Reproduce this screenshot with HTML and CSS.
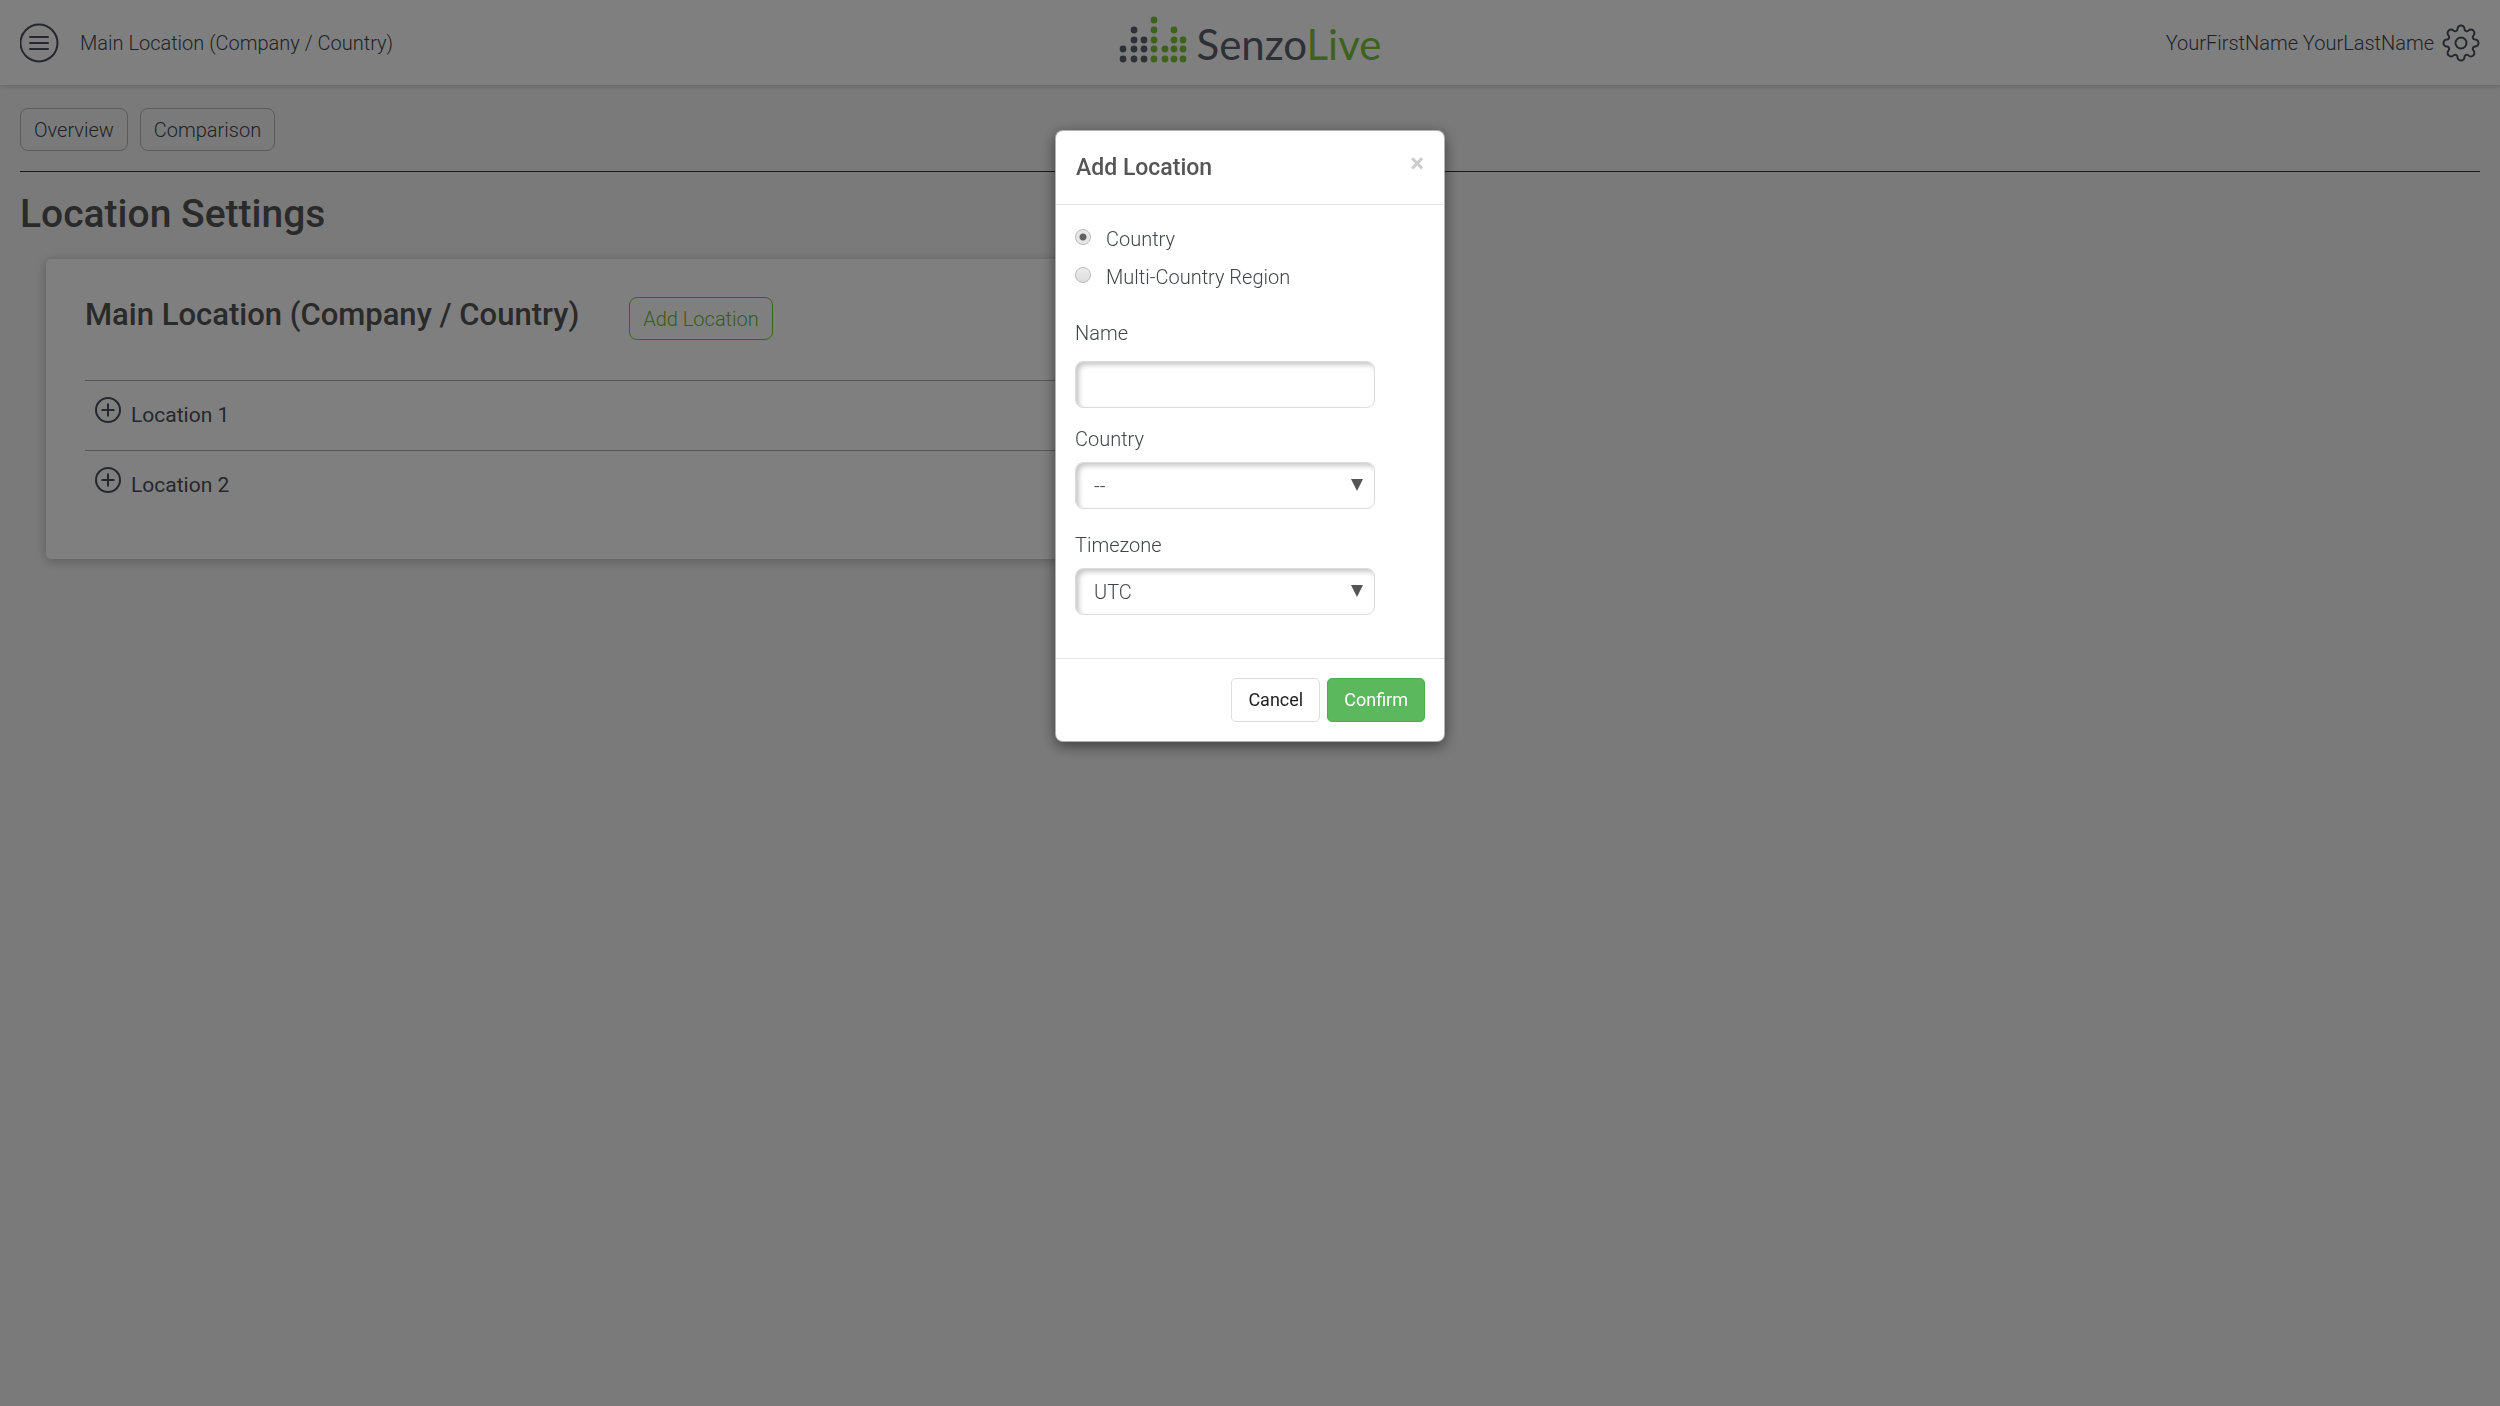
FILE: index.html
```html
<!DOCTYPE html>
<html lang="en">
<head>
    <meta charset="UTF-8">
    <meta name="viewport" content="width=device-width, initial-scale=1.0">
    <title>SenzoLive - Location Settings</title>
    <link rel="stylesheet" href="styles.css">
</head>
<body>
    <header class="topbar">
        <div class="topbar-left">
            <button class="icon-button" type="button" aria-label="Menu">
                <svg width="40" height="40" viewBox="0 0 40 40" fill="none" stroke="currentColor" stroke-width="2" stroke-linecap="round">
                    <circle cx="19" cy="20" r="18.5"/>
                    <path d="M10 14h18M10 20h18M10 26h18"/>
                </svg>
            </button>
            <span>Main Location (Company / Country)</span>
        </div>

        <a class="logo" href="#" aria-label="SenzoLive">
            <svg width="68" height="54" viewBox="0 0 68 54">
                <g class="logo-dark">
                    <circle cx="4" cy="33" r="3.4"/><circle cx="4" cy="43" r="3.4"/>
                    <circle cx="15" cy="14" r="3.4"/><circle cx="15" cy="24" r="3.4"/><circle cx="15" cy="33" r="3.4"/><circle cx="15" cy="43" r="3.4"/>
                    <circle cx="25" cy="24" r="3.4"/><circle cx="25" cy="33" r="3.4"/><circle cx="25" cy="43" r="3.4"/>
                </g>
                <g class="logo-green">
                    <circle cx="35" cy="4" r="3.4"/><circle cx="35" cy="14" r="3.4"/><circle cx="35" cy="24" r="3.4"/><circle cx="35" cy="33" r="3.4"/><circle cx="35" cy="43" r="3.4"/>
                    <circle cx="46" cy="33" r="3.4"/><circle cx="46" cy="43" r="3.4"/>
                    <circle cx="55" cy="14" r="3.4"/><circle cx="55" cy="24" r="3.4"/><circle cx="55" cy="33" r="3.4"/><circle cx="55" cy="43" r="3.4"/>
                    <circle cx="64" cy="24" r="3.4"/><circle cx="64" cy="33" r="3.4"/><circle cx="64" cy="43" r="3.4"/>
                </g>
            </svg>
            <span class="logo-text"><span class="logo-dark">Senzo</span><span class="logo-green">Live</span></span>
        </a>

        <div class="topbar-right">
            <span>YourFirstName YourLastName</span>
            <button class="icon-button" type="button" aria-label="Settings">
                <svg width="38" height="38" viewBox="-19 -19 38 38" fill="none" stroke="currentColor" stroke-width="2" stroke-linejoin="round">
                    <circle r="5.5"/>
                    <path d="M-3.5-14A3.5 3.5 0 0 1 3.5-14A2.3 2.3 0 0 0 7.4-12.4A3.5 3.5 0 0 1 12.4-7.4A2.3 2.3 0 0 0 14-3.5A3.5 3.5 0 0 1 14 3.5A2.3 2.3 0 0 0 12.4 7.4A3.5 3.5 0 0 1 7.4 12.4A2.3 2.3 0 0 0 3.5 14A3.5 3.5 0 0 1-3.5 14A2.3 2.3 0 0 0-7.4 12.4A3.5 3.5 0 0 1-12.4 7.4A2.3 2.3 0 0 0-14 3.5A3.5 3.5 0 0 1-14-3.5A2.3 2.3 0 0 0-12.4-7.4A3.5 3.5 0 0 1-7.4-12.4A2.3 2.3 0 0 0-3.5-14Z"/>
                </svg>
            </button>
        </div>
    </header>

    <main class="page">
        <nav class="tabs">
            <button class="btn-outline" type="button">Overview</button>
            <button class="btn-outline" type="button">Comparison</button>
        </nav>

        <h1>Location Settings</h1>

        <section class="card">
            <div class="card-header">
                <h2>Main Location (Company / Country)</h2>
                <button class="btn-outline btn-green" type="button">Add Location</button>
            </div>
            <ul class="locations">
                <li>
                    <button class="expand" type="button">
                        <svg width="26" height="26" viewBox="0 0 26 26" fill="none" stroke="currentColor" stroke-width="2">
                            <circle cx="13" cy="13" r="12"/>
                            <path d="M13 6.5v13M6.5 13h13"/>
                        </svg>
                        <span>Location 1</span>
                    </button>
                </li>
                <li>
                    <button class="expand" type="button">
                        <svg width="26" height="26" viewBox="0 0 26 26" fill="none" stroke="currentColor" stroke-width="2">
                            <circle cx="13" cy="13" r="12"/>
                            <path d="M13 6.5v13M6.5 13h13"/>
                        </svg>
                        <span>Location 2</span>
                    </button>
                </li>
            </ul>
        </section>
    </main>

    <div class="overlay">
        <form class="modal" role="dialog" aria-labelledby="modal-title">
            <div class="modal-header">
                <h3 id="modal-title">Add Location</h3>
                <button class="close" type="button" aria-label="Close">&times;</button>
            </div>

            <div class="modal-body">
                <div class="radio-row">
                    <input type="radio" name="type" id="type-country" checked>
                    <label for="type-country">Country</label>
                </div>
                <div class="radio-row">
                    <input type="radio" name="type" id="type-region">
                    <label for="type-region">Multi-Country Region</label>
                </div>

                <div class="field field-text">
                    <label for="name">Name</label>
                    <input class="control" type="text" id="name">
                </div>
                <div class="field">
                    <label for="country">Country</label>
                    <div class="select-wrap">
                        <select class="control" id="country">
                            <option>--</option>
                        </select>
                    </div>
                </div>
                <div class="field">
                    <label for="timezone">Timezone</label>
                    <div class="select-wrap">
                        <select class="control" id="timezone">
                            <option>UTC</option>
                        </select>
                    </div>
                </div>
            </div>

            <div class="modal-footer">
                <button class="btn" type="button">Cancel</button>
                <button class="btn btn-success" type="submit">Confirm</button>
            </div>
        </form>
    </div>
</body>
</html>
```

FILE: styles.css
```css
* {
    margin: 0;
    padding: 0;
    box-sizing: border-box;
}

body {
    font-family: Roboto, "Liberation Sans", sans-serif;
    font-size: 20px;
    font-weight: 300;
    line-height: 28px;
    color: #41464b;
    background: #f5f5f5;
}

button,
input,
select {
    font: inherit;
    color: inherit;
}

button {
    background: none;
    border: none;
    cursor: pointer;
}

svg {
    display: block;
}

/* top bar */
.topbar {
    display: grid;
    grid-template-columns: 1fr auto 1fr;
    align-items: center;
    height: 85px;
    padding: 0 20px;
    background: white;
    box-shadow: 0 1px 6px rgba(0, 0, 0, 0.2);
}

.topbar-left,
.topbar-right {
    display: flex;
    align-items: center;
    gap: 20px;
}

.topbar-right {
    justify-content: flex-end;
    gap: 8px;
}

.icon-button {
    color: #4a4f5a;
}

.logo {
    display: flex;
    align-items: flex-end;
    gap: 10px;
    text-decoration: none;
}

.logo-text {
    font-family: Lato, "Open Sans", sans-serif;
    font-size: 42px;
    font-weight: 400;
    line-height: 52px;
}

.logo-dark {
    color: #5a616c;
    fill: #5a616c;
}

.logo-green {
    color: #7ac636;
    fill: #7ac636;
}

/* page */
.page {
    padding: 23px 20px;
}

.tabs {
    display: flex;
    gap: 12px;
    padding-bottom: 20px;
    border-bottom: 1px solid #333;
}

.btn-outline {
    height: 43px;
    padding: 0 13px;
    border: 1px solid #b4b4b4;
    border-radius: 8px;
}

.btn-green {
    color: #6cb83a;
    border-color: #7ac636;
}

h1 {
    margin: 16px 0 19px;
    font-size: 39px;
    font-weight: 500;
    line-height: 52px;
    color: #555;
}

.card {
    width: 50%;
    height: 300px;
    margin-left: 26px;
    padding: 38px 39px;
    background: white;
    border-radius: 5px;
    box-shadow: 0 2px 12px rgba(0, 0, 0, 0.25);
}

.card-header {
    display: flex;
    gap: 50px;
    padding-bottom: 40px;
}

h2 {
    font-size: 31px;
    font-weight: 500;
    line-height: 36px;
    color: #555;
}

.locations {
    list-style: none;
}

.locations li {
    height: 70px;
    padding: 16px 10px;
    border-top: 1px solid #aaa;
}

.expand {
    display: flex;
    gap: 10px;
    font-size: 21px;
    font-weight: 400;
    line-height: 36px;
    color: #4a4f5a;
}

/* modal */
.overlay {
    position: fixed;
    inset: 0;
    display: flex;
    justify-content: center;
    align-items: flex-start;
    padding-top: 130px;
    background: rgba(0, 0, 0, 0.5);
}

.modal {
    width: 390px;
    background: white;
    border: 1px solid rgba(0, 0, 0, 0.3);
    border-radius: 8px;
    box-shadow: 0 4px 14px rgba(0, 0, 0, 0.5);
}

.modal-header {
    display: flex;
    justify-content: space-between;
    padding: 20px 20px 19px;
    border-bottom: 1px solid #e5e5e5;
}

.modal-header h3 {
    font-size: 23px;
    font-weight: 500;
    line-height: 34px;
    color: #555;
}

.close {
    height: 24px;
    font-size: 26px;
    font-weight: 700;
    line-height: 24px;
    color: #ccc;
}

.modal-body {
    padding: 20px 19px 21px;
}

.radio-row {
    display: flex;
    gap: 15px;
    height: 38px;
}

.radio-row input {
    appearance: none;
    width: 16px;
    height: 16px;
    margin-top: 4px;
    border: 1px solid #bbb;
    border-radius: 50%;
    background: linear-gradient(#eee, #ddd);
}

.radio-row input:checked {
    background: radial-gradient(circle, #606060 3px, #e6e6e6 4px);
}

.field {
    width: 300px;
    margin-bottom: 22px;
}

.field label {
    display: block;
    margin-bottom: 9px;
}

.field-text {
    margin: 18px 0 17px;
}

.field-text label {
    margin-bottom: 14px;
}

.control {
    display: block;
    width: 100%;
    height: 47px;
    padding: 0 18px;
    background: white;
    border: 1px solid #ddd;
    border-radius: 8px;
    box-shadow: inset 3px 3px 5px rgba(0, 0, 0, 0.22);
    appearance: none;
}

.select-wrap {
    position: relative;
}

.select-wrap::after {
    content: "";
    position: absolute;
    top: 17px;
    right: 12px;
    border: 6px solid transparent;
    border-top: 12px solid #555;
    border-bottom: 0;
    pointer-events: none;
}

.modal-footer {
    display: flex;
    justify-content: flex-end;
    gap: 7px;
    padding: 19px;
    border-top: 1px solid #e5e5e5;
}

.btn {
    height: 44px;
    padding: 0 16px;
    font-size: 18px;
    font-weight: 400;
    color: #222;
    border: 1px solid #ddd;
    border-radius: 5px;
}

.btn-success {
    color: white;
    background: #5cb85c;
    border-color: #4cae4c;
}
```
